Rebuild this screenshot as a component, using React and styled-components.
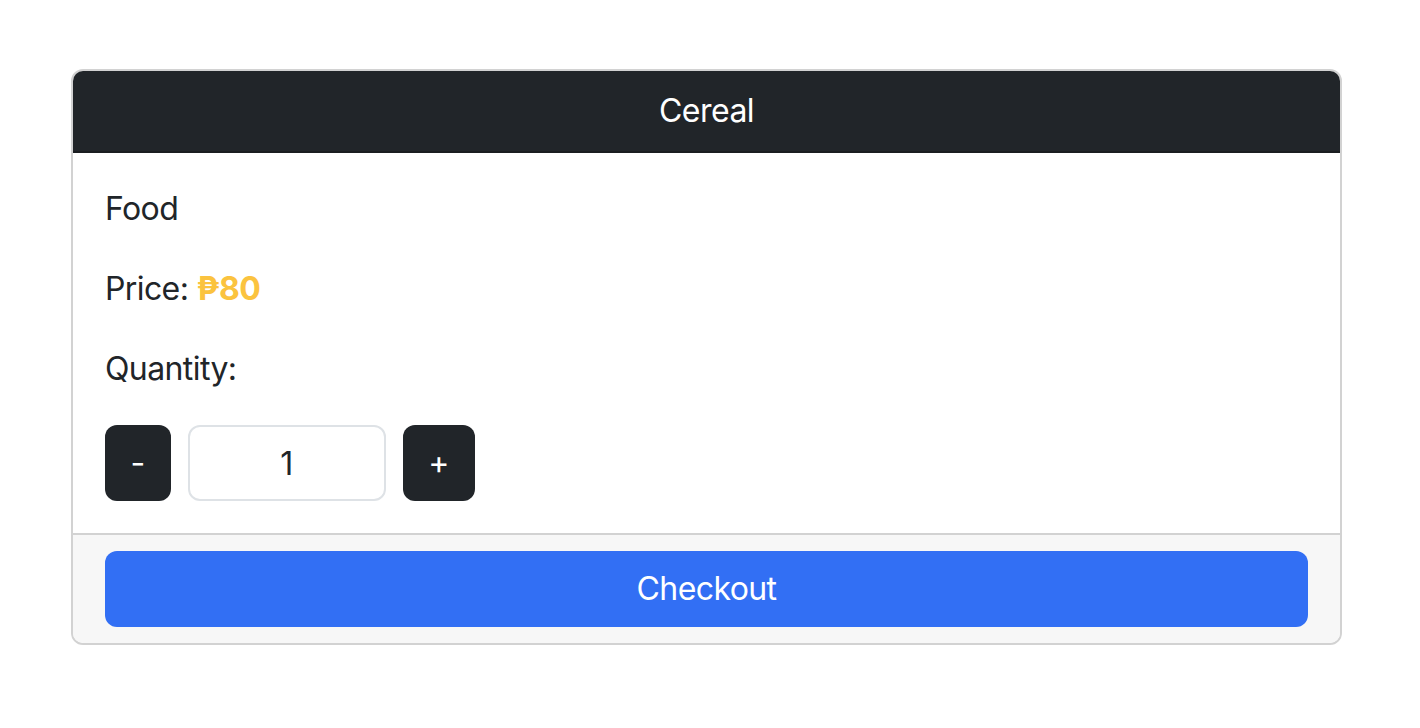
import React, { useState } from "react";
import styled, { createGlobalStyle } from "styled-components";

const Global = createGlobalStyle`
  html, body { margin: 0; padding: 0; background: #ffffff; }
  body {
    font-family: Inter, "Noto Sans", "Liberation Sans", sans-serif;
    color: #212529;
    -webkit-font-smoothing: antialiased;
  }
  * { box-sizing: border-box; }
`;

const Page = styled.div`
  padding: 69px 78px 0 71px;
`;

const Card = styled.section`
  display: flex;
  flex-direction: column;
  border: 2px solid #d2d2d2;
  border-radius: 12px;
  overflow: hidden;
  background: #fff;
`;

const Header = styled.header`
  background: #212529;
  color: #fff;
  text-align: center;
  font-size: 32px;
  line-height: 48px;
  padding: 16px 32px;
  border-bottom: 2px solid #1a1d20;
  letter-spacing: -0.5px;
`;

const Body = styled.div`
  display: flex;
  flex-direction: column;
  padding: 32px;
`;

const Line = styled.p`
  margin: 0 0 32px;
  font-size: 32px;
  line-height: 48px;
  letter-spacing: -0.6px;
`;

const Price = styled.span`
  color: #fbc33f;
  font-weight: 700;
`;

const Stepper = styled.div`
  display: flex;
  align-items: center;
  gap: 17px;
`;

const StepButton = styled.button`
  height: 76px;
  padding: 0 ${(p) => p.$padX}px;
  border: none;
  border-radius: 12px;
  background: #212529;
  color: #fff;
  font-family: inherit;
  font-size: 32px;
  line-height: 48px;
  cursor: pointer;
`;

const QtyInput = styled.input`
  width: 198px;
  height: 76px;
  border: 2px solid #dee2e6;
  border-radius: 12px;
  text-align: center;
  font-family: inherit;
  font-size: 32px;
  color: #212529;
  outline: none;
  background: #fff;
`;

const Footer = styled.footer`
  background: #f7f7f7;
  border-top: 2px solid #d2d2d2;
  padding: 16px 32px;
`;

const Checkout = styled.button`
  width: 100%;
  height: 76px;
  border: none;
  border-radius: 12px;
  background: #326ff4;
  color: #fff;
  font-family: inherit;
  font-size: 32px;
  line-height: 48px;
  letter-spacing: -0.6px;
  cursor: pointer;
`;

export default function App() {
  const [qty, setQty] = useState(1);
  return (
    <Page>
      <Global />
      <Card>
        <Header>Cereal</Header>
        <Body>
          <Line>Food</Line>
          <Line>
            Price: <Price>₱80</Price>
          </Line>
          <Line>Quantity:</Line>
          <Stepper>
            <StepButton $padX={25.5} onClick={() => setQty((q) => Math.max(1, q - 1))}>-</StepButton>
            <QtyInput value={qty} readOnly />
            <StepButton $padX={25.5} onClick={() => setQty((q) => q + 1)}>+</StepButton>
          </Stepper>
        </Body>
        <Footer>
          <Checkout>Checkout</Checkout>
        </Footer>
      </Card>
    </Page>
  );
}
